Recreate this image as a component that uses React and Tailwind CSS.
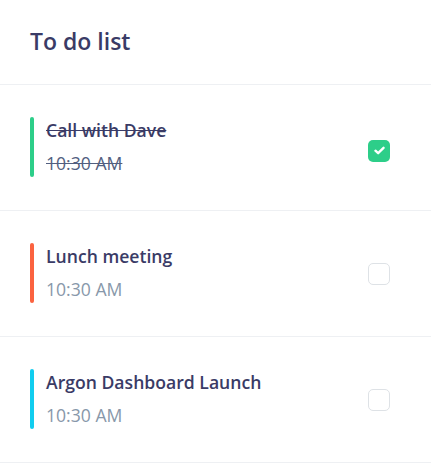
import { useState } from "react";

const initialTodos = [
    { title: "Call with Dave", time: "10:30 AM", bar: "bg-[#2dce89]", done: true },
    { title: "Lunch meeting", time: "10:30 AM", bar: "bg-[#fb6340]", done: false },
    { title: "Argon Dashboard Launch", time: "10:30 AM", bar: "bg-[#11cdef]", done: false },
];

function CheckBox({ checked, onToggle }) {
    return (
        <button
            type="button"
            onClick={onToggle}
            className={
                checked
                    ? "w-[22px] h-[22px] rounded-[5px] bg-[#2dce89] flex items-center justify-center"
                    : "w-[22px] h-[22px] rounded-[5px] border border-[#dee2e6] bg-white"
            }
        >
            {checked && (
                <svg width="11" height="9" viewBox="0 0 12 10">
                    <path d="M1.5 5.2 L4.5 8 L10.5 2" fill="none" stroke="white" strokeWidth="2.6" strokeLinecap="round" strokeLinejoin="round" />
                </svg>
            )}
        </button>
    );
}

function App() {
    const [todos, setTodos] = useState(initialTodos);

    function toggle(i) {
        setTodos(todos.map((t, idx) => (idx === i ? { ...t, done: !t.done } : t)));
    }

    return (
        <div className="w-[431px] h-[468px] bg-white font-['Open_Sans',sans-serif]">
            <div className="h-[85px] px-[30px] flex items-center border-b border-[#eef0f3]">
                <h3 className="text-[23px] font-semibold text-[#3a3b66] leading-none -mt-[2px]">To do list</h3>
            </div>

            {todos.map((todo, i) => (
                <div key={i} className="h-[126px] pl-[30px] pr-[41px] flex items-center justify-between border-b border-[#eef0f3]">
                    <div className="flex items-stretch -mt-[1px]">
                        <div className={"w-[4px] rounded-[2px] " + todo.bar}></div>
                        <div className="pl-[12px]">
                            <div className={"text-[17.6px] leading-[26px] font-semibold text-[#3a3b66]" + (todo.done ? " line-through" : "")}>
                                {todo.title}
                            </div>
                            <div className={"mt-[6px] text-[17.6px] leading-[28px] " + (todo.done ? "line-through text-[#525f7f]" : "text-[#8898aa]")}>
                                {todo.time}
                            </div>
                        </div>
                    </div>
                    <div className="mt-[6px]">
                        <CheckBox checked={todo.done} onToggle={() => toggle(i)} />
                    </div>
                </div>
            ))}
        </div>
    );
}

export default App;
